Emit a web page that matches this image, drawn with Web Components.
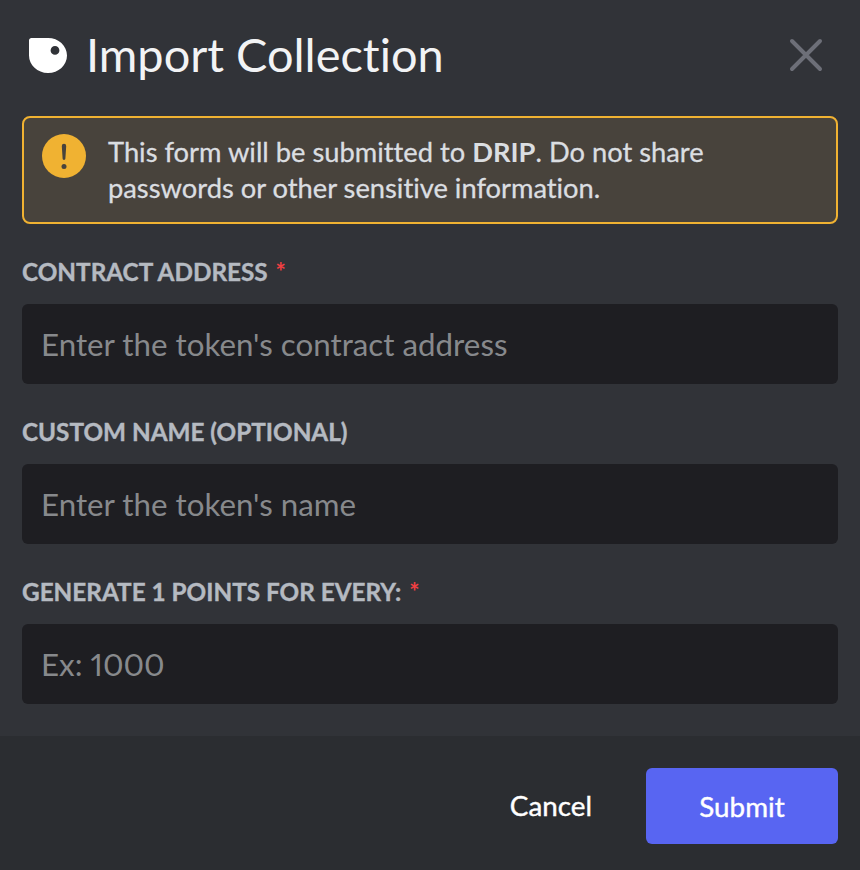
<!DOCTYPE html>
<html lang="en">
<head>
<meta charset="utf-8">
<title>Import Collection</title>
<style>
    html, body { margin: 0; padding: 0; background: #313338; }
    body { font-family: Lato, "Noto Sans", sans-serif; font-variant-ligatures: none; overflow: hidden; }
</style>
</head>
<body>
<import-modal>
    <span slot="title">Import Collection</span>
    <form-warning>This form will be submitted to <b>DRIP</b>. Do not share<br>passwords or other sensitive information.</form-warning>
    <form-field label="CONTRACT ADDRESS" required placeholder="Enter the token's contract address"></form-field>
    <form-field label="CUSTOM NAME (OPTIONAL)" placeholder="Enter the token's name"></form-field>
    <form-field label="GENERATE 1 POINTS FOR EVERY:" required placeholder="Ex: 1000"></form-field>
</import-modal>
<script>
class ImportModal extends HTMLElement {
    constructor() {
        super();
        this.attachShadow({ mode: 'open' });
        this.shadowRoot.innerHTML = `
            <style>
                :host {
                    display: flex;
                    flex-direction: column;
                    width: 860px;
                    height: 870px;
                    background: #313338;
                    color: #f2f3f5;
                }
                .header {
                    display: flex;
                    align-items: center;
                    height: 116px;
                    box-sizing: border-box;
                    padding: 0 36px 6px 29px;
                }
                .header__logo {
                    width: 38px;
                    height: 35px;
                    margin-right: 19px;
                    flex: none;
                }
                .header__title {
                    flex: 1;
                    font-size: 46.9px;
                    line-height: 56px;
                    padding-bottom: 2px;
                }
                .header__close {
                    width: 36px;
                    height: 36px;
                    flex: none;
                }
                .body {
                    flex: 1;
                    display: flex;
                    flex-direction: column;
                    padding: 0 22px;
                }
                .footer {
                    display: flex;
                    justify-content: flex-end;
                    align-items: flex-start;
                    height: 134px;
                    box-sizing: border-box;
                    padding: 32px 22px 0;
                    background: #2b2d31;
                }
                .footer__cancel {
                    color: #fff;
                    font-size: 27.800px;
                    -webkit-text-stroke: 0.4px #fff;
                    line-height: 76px;
                    margin-right: 54px;
                }
                .footer__submit {
                    display: flex;
                    align-items: center;
                    justify-content: center;
                    width: 192px;
                    height: 76px;
                    border-radius: 6px;
                    background: #5865f2;
                    color: #fff;
                    font-size: 27.800px;
                    -webkit-text-stroke: 0.4px #fff;
                }
            </style>
            <div class="header">
                <svg class="header__logo" viewBox="0 0 38 35">
                    <path fill="#fff" fill-rule="evenodd" d="M0 2.500C0 1 1 0 2.500 0H19C29.500 0 38 7.800 38 17.500S29.500 35 19 35C8.500 35 0 27 0 17.500ZM26 8a4.400 4.400 0 1 0 0 8.800a4.400 4.400 0 1 0 0-8.800Z"/>
                </svg>
                <div class="header__title"><slot name="title"></slot></div>
                <svg class="header__close" viewBox="0 0 36 36">
                    <path stroke="#6d6f78" stroke-width="4" stroke-linecap="round" fill="none" d="M4 4L32 32M32 4L4 32"/>
                </svg>
            </div>
            <div class="body"><slot></slot></div>
            <div class="footer">
                <div class="footer__cancel">Cancel</div>
                <div class="footer__submit">Submit</div>
            </div>
        `;
    }
}

class FormWarning extends HTMLElement {
    constructor() {
        super();
        this.attachShadow({ mode: 'open' });
        this.shadowRoot.innerHTML = `
            <style>
                :host {
                    display: flex;
                    align-items: flex-start;
                    box-sizing: border-box;
                    height: 108px;
                    padding: 16px 18px 0 18px;
                    border: 2px solid #f0b232;
                    border-radius: 8px;
                    background: #48433c;
                    color: #dbdee1;
                    font-size: 27.300px;
                    -webkit-text-stroke: 0.3px #dbdee1;
                    line-height: 36px;
                    margin-bottom: 32px;
                }
                svg {
                    flex: none;
                    width: 44px;
                    height: 44px;
                    margin: 0 22px 0 0;
                }
                ::slotted(b) { font-weight: 700; -webkit-text-stroke: 0; }
            </style>
            <svg viewBox="0 0 44 44">
                <circle cx="22" cy="22" r="22" fill="#f0b232"/>
                <path fill="#48433c" d="M19.800 12a2.200 2.200 0 0 1 4.400 0L23.400 24.500a1.400 1.400 0 0 1-2.800 0Z"/>
                <circle cx="22" cy="32.500" r="2.500" fill="#48433c"/>
            </svg>
            <div><slot></slot></div>
        `;
    }
}

class FormField extends HTMLElement {
    constructor() {
        super();
        this.attachShadow({ mode: 'open' });
        this.shadowRoot.innerHTML = `
            <style>
                :host {
                    display: block;
                    margin-bottom: 32px;
                }
                .field__label {
                    height: 32px;
                    margin-bottom: 16px;
                    color: #b5bac1;
                    font-size: 24.300px;
                    -webkit-text-stroke: 0.4px #b5bac1;
                    line-height: 32px;
                    font-weight: 700;
                }
                .field__required {
                    color: #f23f42;
                    -webkit-text-stroke: 0;
                    margin-left: 2px;
                }
                .field__input {
                    display: flex;
                    align-items: center;
                    box-sizing: border-box;
                    height: 80px;
                    padding: 0 20px 0 19px;
                    border-radius: 6px;
                    background: #1e1e22;
                    color: #87898c;
                    font-size: 31.300px;
                    font-variant-numeric: proportional-nums;
                }
            </style>
            <div class="field__label"><span class="field__text"></span><span class="field__required"> *</span></div>
            <div class="field__input"></div>
        `;
    }

    connectedCallback() {
        this.shadowRoot.querySelector('.field__text').textContent = this.getAttribute('label');
        this.shadowRoot.querySelector('.field__input').textContent = this.getAttribute('placeholder');
        if (!this.hasAttribute('required')) {
            this.shadowRoot.querySelector('.field__required').remove();
        }
    }
}

customElements.define('import-modal', ImportModal);
customElements.define('form-warning', FormWarning);
customElements.define('form-field', FormField);
</script>
</body>
</html>
